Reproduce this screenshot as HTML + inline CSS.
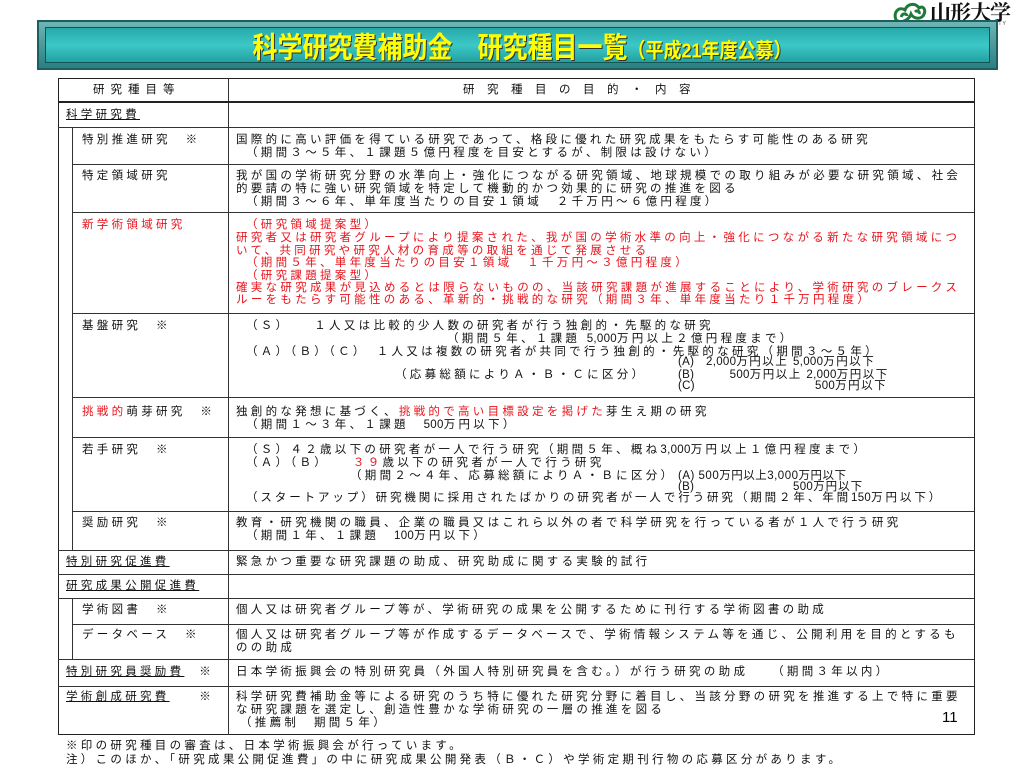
<!DOCTYPE html>
<html><head><meta charset="utf-8"><style>
body{margin:0;width:1024px;height:768px;background:#fff;position:relative;overflow:hidden;font-family:"Liberation Sans","Noto Sans CJK JP",sans-serif;}
.t{position:absolute;font-size:11.5px;line-height:13px;letter-spacing:3.3px;white-space:nowrap;color:#111;}
.a{letter-spacing:0.3px}
.r{color:#e8141c}
.u{text-decoration:underline}
.h{position:absolute;height:1px;background:#333;right:50px}
.v{position:absolute;width:1px;background:#333}
</style></head><body>
<svg style="position:absolute;left:893px;top:2px" width="36" height="24" viewBox="0 0 36 24"><path d="M3 18 C0 10 6 4 12 8 C14 2 22 0 26 6 C30 3 34 8 30 14 C26 18 20 16 18 12 C16 18 8 22 3 18Z M8 15 C10 10 14 12 14 14 M22 10 C24 8 27 9 26 12" fill="none" stroke="#1f7a3a" stroke-width="3"/></svg>
<div style="position:absolute;left:930px;top:-3px;font-family:'Noto Serif CJK SC',serif;font-size:21px;font-weight:bold;color:#111;letter-spacing:-1px">山形大学</div>
<div style="position:absolute;left:930px;top:21px;font-size:5px;color:#444;letter-spacing:1px">YAMAGATA UNIVERSITY</div>
<div style="position:absolute;left:37px;top:20px;width:961px;height:50px;background:#1d5f5f;"></div>
<div style="position:absolute;left:39px;top:22px;width:957px;height:46px;background:linear-gradient(#6fb5b5,#2a7f80);"></div>
<div style="position:absolute;left:45px;top:27px;width:945px;height:36px;background:linear-gradient(#27a8a8,#3cc8c8 50%,#24a0a0);border:1px solid #155;box-sizing:border-box"></div>
<div style="position:absolute;left:0;width:1044px;top:28px;text-align:center;font-size:25px;font-weight:bold;color:#ff0;text-shadow:1px 1px 0 #333;transform:scaleY(1.15)">科学研究費補助金　研究種目一覧<span style="font-size:18px">（平成21年度公募）</span></div>
<div style="position:absolute;left:58px;top:78px;width:917px;height:657px;border:1.5px solid #222;box-sizing:border-box"></div>
<div class="v" style="left:228px;top:78px;height:657px"></div>
<div class="v" style="left:72px;top:127px;height:423px"></div>
<div class="v" style="left:72px;top:598px;height:61px"></div>
<div class="h" style="left:58px;top:101px;height:1.5px;background:#222"></div>
<div class="h" style="left:58px;top:127px"></div>
<div class="h" style="left:72px;top:164px"></div>
<div class="h" style="left:72px;top:212px"></div>
<div class="h" style="left:72px;top:313px"></div>
<div class="h" style="left:72px;top:397px"></div>
<div class="h" style="left:72px;top:437px"></div>
<div class="h" style="left:72px;top:511px"></div>
<div class="h" style="left:58px;top:550px"></div>
<div class="h" style="left:58px;top:574px"></div>
<div class="h" style="left:58px;top:598px"></div>
<div class="h" style="left:72px;top:624px"></div>
<div class="h" style="left:58px;top:659px"></div>
<div class="h" style="left:58px;top:686px"></div>

<div class="t" style="left:93px;top:84px;letter-spacing:6px">研究種目等</div>
<div class="t" style="left:463px;top:84px;letter-spacing:12.5px">研究種目の目的・内容</div>

<div class="t u" style="left:66px;top:109px">科学研究費</div>

<div class="t" style="left:82px;top:134px">特別推進研究　※</div>
<div class="t" style="left:236px;top:134px">国際的に高い評価を得ている研究であって、格段に優れた研究成果をもたらす可能性のある研究</div>
<div class="t" style="left:246px;top:147px">（期間３～５年、１課題５億円程度を目安とするが、制限は設けない）</div>

<div class="t" style="left:82px;top:170px">特定領域研究</div>
<div class="t" style="left:236px;top:170px">我が国の学術研究分野の水準向上・強化につながる研究領域、地球規模での取り組みが必要な研究領域、社会</div>
<div class="t" style="left:236px;top:183px">的要請の特に強い研究領域を特定して機動的かつ効果的に研究の推進を図る</div>
<div class="t" style="left:246px;top:196px">（期間３～６年、単年度当たりの目安１領域　２千万円～６億円程度）</div>

<div class="t r" style="left:82px;top:219px">新学術領域研究</div>
<div class="t r" style="left:246px;top:219px">（研究領域提案型）</div>
<div class="t r" style="left:236px;top:232px">研究者又は研究者グループにより提案された、我が国の学術水準の向上・強化につながる新たな研究領域につ</div>
<div class="t r" style="left:236px;top:245px">いて、共同研究や研究人材の育成等の取組を通じて発展させる</div>
<div class="t r" style="left:246px;top:257px">（期間５年、単年度当たりの目安１領域　１千万円～３億円程度）</div>
<div class="t r" style="left:246px;top:270px">（研究課題提案型）</div>
<div class="t r" style="left:236px;top:282px">確実な研究成果が見込めるとは限らないものの、当該研究課題が進展することにより、学術研究のブレークス</div>
<div class="t r" style="left:236px;top:294px">ルーをもたらす可能性のある、革新的・挑戦的な研究（期間３年、単年度当たり１千万円程度）</div>

<div class="t" style="left:82px;top:320px">基盤研究　※</div>
<div class="t" style="left:246px;top:320px">（Ｓ）　　１人又は比較的少人数の研究者が行う独創的・先駆的な研究</div>
<div class="t" style="left:447px;top:333px">（期間５年、１課題 <span class="a">5,000</span>万円以上２億円程度まで）</div>
<div class="t" style="left:246px;top:346px">（Ａ）（Ｂ）（Ｃ）　１人又は複数の研究者が共同で行う独創的・先駆的な研究（期間３～５年）</div>
<div class="t" style="left:678px;top:356px;letter-spacing:1.5px"><span class="a">(A)　2,000</span>万円以上 <span class="a">5,000</span>万円以下</div>
<div class="t" style="left:395px;top:369px">（応募総額によりＡ・Ｂ・Ｃに区分）</div>
<div class="t" style="left:678px;top:369px;letter-spacing:1.5px"><span class="a">(B)　　　500</span>万円以上 <span class="a">2,000</span>万円以下</div>
<div class="t a" style="left:678px;top:380px">(C)</div>
<div class="t" style="left:815px;top:380px;letter-spacing:1.5px"><span class="a">500</span>万円以下</div>

<div class="t" style="left:82px;top:406px"><span class="r">挑戦的</span>萌芽研究　※</div>
<div class="t" style="left:236px;top:406px">独創的な発想に基づく、<span class="r">挑戦的で高い目標設定を掲げた</span>芽生え期の研究</div>
<div class="t" style="left:246px;top:419px">（期間１～３年、１課題　<span class="a">500</span>万円以下）</div>

<div class="t" style="left:82px;top:444px">若手研究　※</div>
<div class="t" style="left:246px;top:444px">（Ｓ）４２歳以下の研究者が一人で行う研究（期間５年、概ね<span class="a">3,000</span>万円以上１億円程度まで）</div>
<div class="t" style="left:246px;top:457px">（Ａ）（Ｂ）　　<span class="r">３９</span>歳以下の研究者が一人で行う研究</div>
<div class="t" style="left:350px;top:470px">（期間２～４年、応募総額によりＡ・Ｂに区分）</div>
<div class="t" style="left:678px;top:470px;letter-spacing:0.5px">(A) 500万円以上3,000万円以下</div>
<div class="t a" style="left:678px;top:481px">(B)</div>
<div class="t" style="left:793px;top:481px;letter-spacing:1px"><span class="a">500</span>万円以下</div>
<div class="t" style="left:246px;top:492px;letter-spacing:2.9px">（スタートアップ）研究機関に採用されたばかりの研究者が一人で行う研究（期間２年、年間<span class="a">150</span>万円以下）</div>

<div class="t" style="left:82px;top:517px">奨励研究　※</div>
<div class="t" style="left:236px;top:517px">教育・研究機関の職員、企業の職員又はこれら以外の者で科学研究を行っている者が１人で行う研究</div>
<div class="t" style="left:246px;top:530px">（期間１年、１課題　<span class="a">100</span>万円以下）</div>

<div class="t u" style="left:66px;top:556px">特別研究促進費</div>
<div class="t" style="left:236px;top:556px">緊急かつ重要な研究課題の助成、研究助成に関する実験的試行</div>

<div class="t u" style="left:66px;top:580px">研究成果公開促進費</div>

<div class="t" style="left:82px;top:604px">学術図書　※</div>
<div class="t" style="left:236px;top:604px">個人又は研究者グループ等が、学術研究の成果を公開するために刊行する学術図書の助成</div>

<div class="t" style="left:82px;top:629px">データベース　※</div>
<div class="t" style="left:236px;top:629px">個人又は研究者グループ等が作成するデータベースで、学術情報システム等を通じ、公開利用を目的とするも</div>
<div class="t" style="left:236px;top:642px">のの助成</div>

<div class="t" style="left:66px;top:666px"><span class="u">特別研究員奨励費</span>　※</div>
<div class="t" style="left:236px;top:666px">日本学術振興会の特別研究員（外国人特別研究員を含む。）が行う研究の助成　　（期間３年以内）</div>

<div class="t" style="left:66px;top:691px"><span class="u">学術創成研究費</span>　　※</div>
<div class="t" style="left:236px;top:691px">科学研究費補助金等による研究のうち特に優れた研究分野に着目し、当該分野の研究を推進する上で特に重要</div>
<div class="t" style="left:236px;top:704px">な研究課題を選定し、創造性豊かな学術研究の一層の推進を図る</div>
<div class="t" style="left:240px;top:717px">（推薦制　期間５年）</div>
<div style="position:absolute;left:942px;top:709px;font-size:15px;color:#000">11</div>

<div class="t" style="left:66px;top:740px">※印の研究種目の審査は、日本学術振興会が行っています。</div>
<div class="t" style="left:66px;top:754px">注）このほか、「研究成果公開促進費」の中に研究成果公開発表（Ｂ・Ｃ）や学術定期刊行物の応募区分があります。</div>
</body></html>
